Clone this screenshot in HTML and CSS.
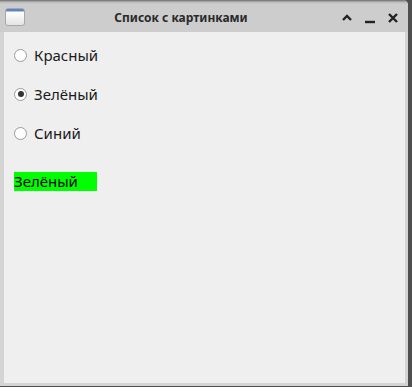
FILE: index.html
```html
<!DOCTYPE html>
<html lang="ru">
<head>
    <meta charset="UTF-8">
    <title>Список с картинками</title>
    <link rel="stylesheet" href="styles.css">
</head>
<body>

    <div class="window">
        <!-- Заголовок окна -->
        <div class="titlebar">
            <div class="app-icon"></div>
            <div class="title">Список с картинками</div>
            <div class="controls">
                <svg width="12" height="12" viewBox="0 0 12 12"><path d="M2 8 L6 4 L10 8" fill="none" stroke="#222" stroke-width="2.4"/></svg>
                <svg width="12" height="12" viewBox="0 0 12 12"><path d="M1 10 H11" fill="none" stroke="#222" stroke-width="2.4"/></svg>
                <svg width="12" height="12" viewBox="0 0 12 12"><path d="M2 2 L10 10 M10 2 L2 10" fill="none" stroke="#222" stroke-width="2.4"/></svg>
            </div>
        </div>

        <div class="content">
            <label class="option"><input type="radio" name="color"> Красный</label>
            <label class="option"><input type="radio" name="color" checked> Зелёный</label>
            <label class="option"><input type="radio" name="color"> Синий</label>
            <div class="result">Зелёный</div>
        </div>
    </div>

</body>
</html>
```

FILE: styles.css
```css
* {
    margin: 0;
    padding: 0;
    box-sizing: border-box;
}

body {
    background-color: #4f4f4f;
    width: 412px;
    height: 387px;
    overflow: hidden;
    font-family: 'Noto Sans', 'Open Sans', sans-serif;
}

.window {
    width: 408px;
    height: 386px;
    background-color: #d4d4d4;
    border-top-right-radius: 5px;
    display: flex;
    flex-direction: column;
}

/* Заголовок */
.titlebar {
    height: 32px;
    display: flex;
    align-items: center;
    background: linear-gradient(#6a6a6a 0px, #b8b8b8 2px, #cdcdcd 4px, #cdcdcd 100%);
    border-top-right-radius: 5px;
    padding: 0 9px 0 5px;
}

.app-icon {
    width: 20px;
    height: 18px;
    margin-top: 2px;
    border: 1px solid #a8a8a8;
    border-radius: 3px;
    background: linear-gradient(#5b86c4 0px, #5b86c4 2px, #ffffff 3px, #e4e4e4 100%);
}

.title {
    flex: 1;
    text-align: center;
    font-weight: bold;
    font-size: 12px;
    color: #2a2a2a;
    padding-right: 4px;
    margin-top: 2px;
}

.controls {
    display: flex;
    gap: 11px;
    margin-top: 4px;
}

/* Содержимое */
.content {
    flex: 1;
    margin: 0 3px 3px 4px;
    background-color: #efefef;
    padding: 3px 10px;
    display: flex;
    flex-direction: column;
    align-items: flex-start;
}

.option {
    display: flex;
    align-items: center;
    gap: 7px;
    height: 39px;
    font-size: 15px;
    color: #1a1a1a;
}

.option input {
    appearance: none;
    width: 13px;
    height: 13px;
    border: 1px solid #9a9a9a;
    border-radius: 50%;
    background-color: #fff;
    margin-top: 1px;
    display: flex;
    align-items: center;
    justify-content: center;
}

.option input:checked::after {
    content: "";
    width: 6px;
    height: 6px;
    border-radius: 50%;
    background-color: #333;
}

.result {
    margin-top: 20px;
    width: 83px;
    height: 19px;
    background-color: #00ff00;
    font-size: 15px;
    line-height: 19px;
    color: #000;
}
```
